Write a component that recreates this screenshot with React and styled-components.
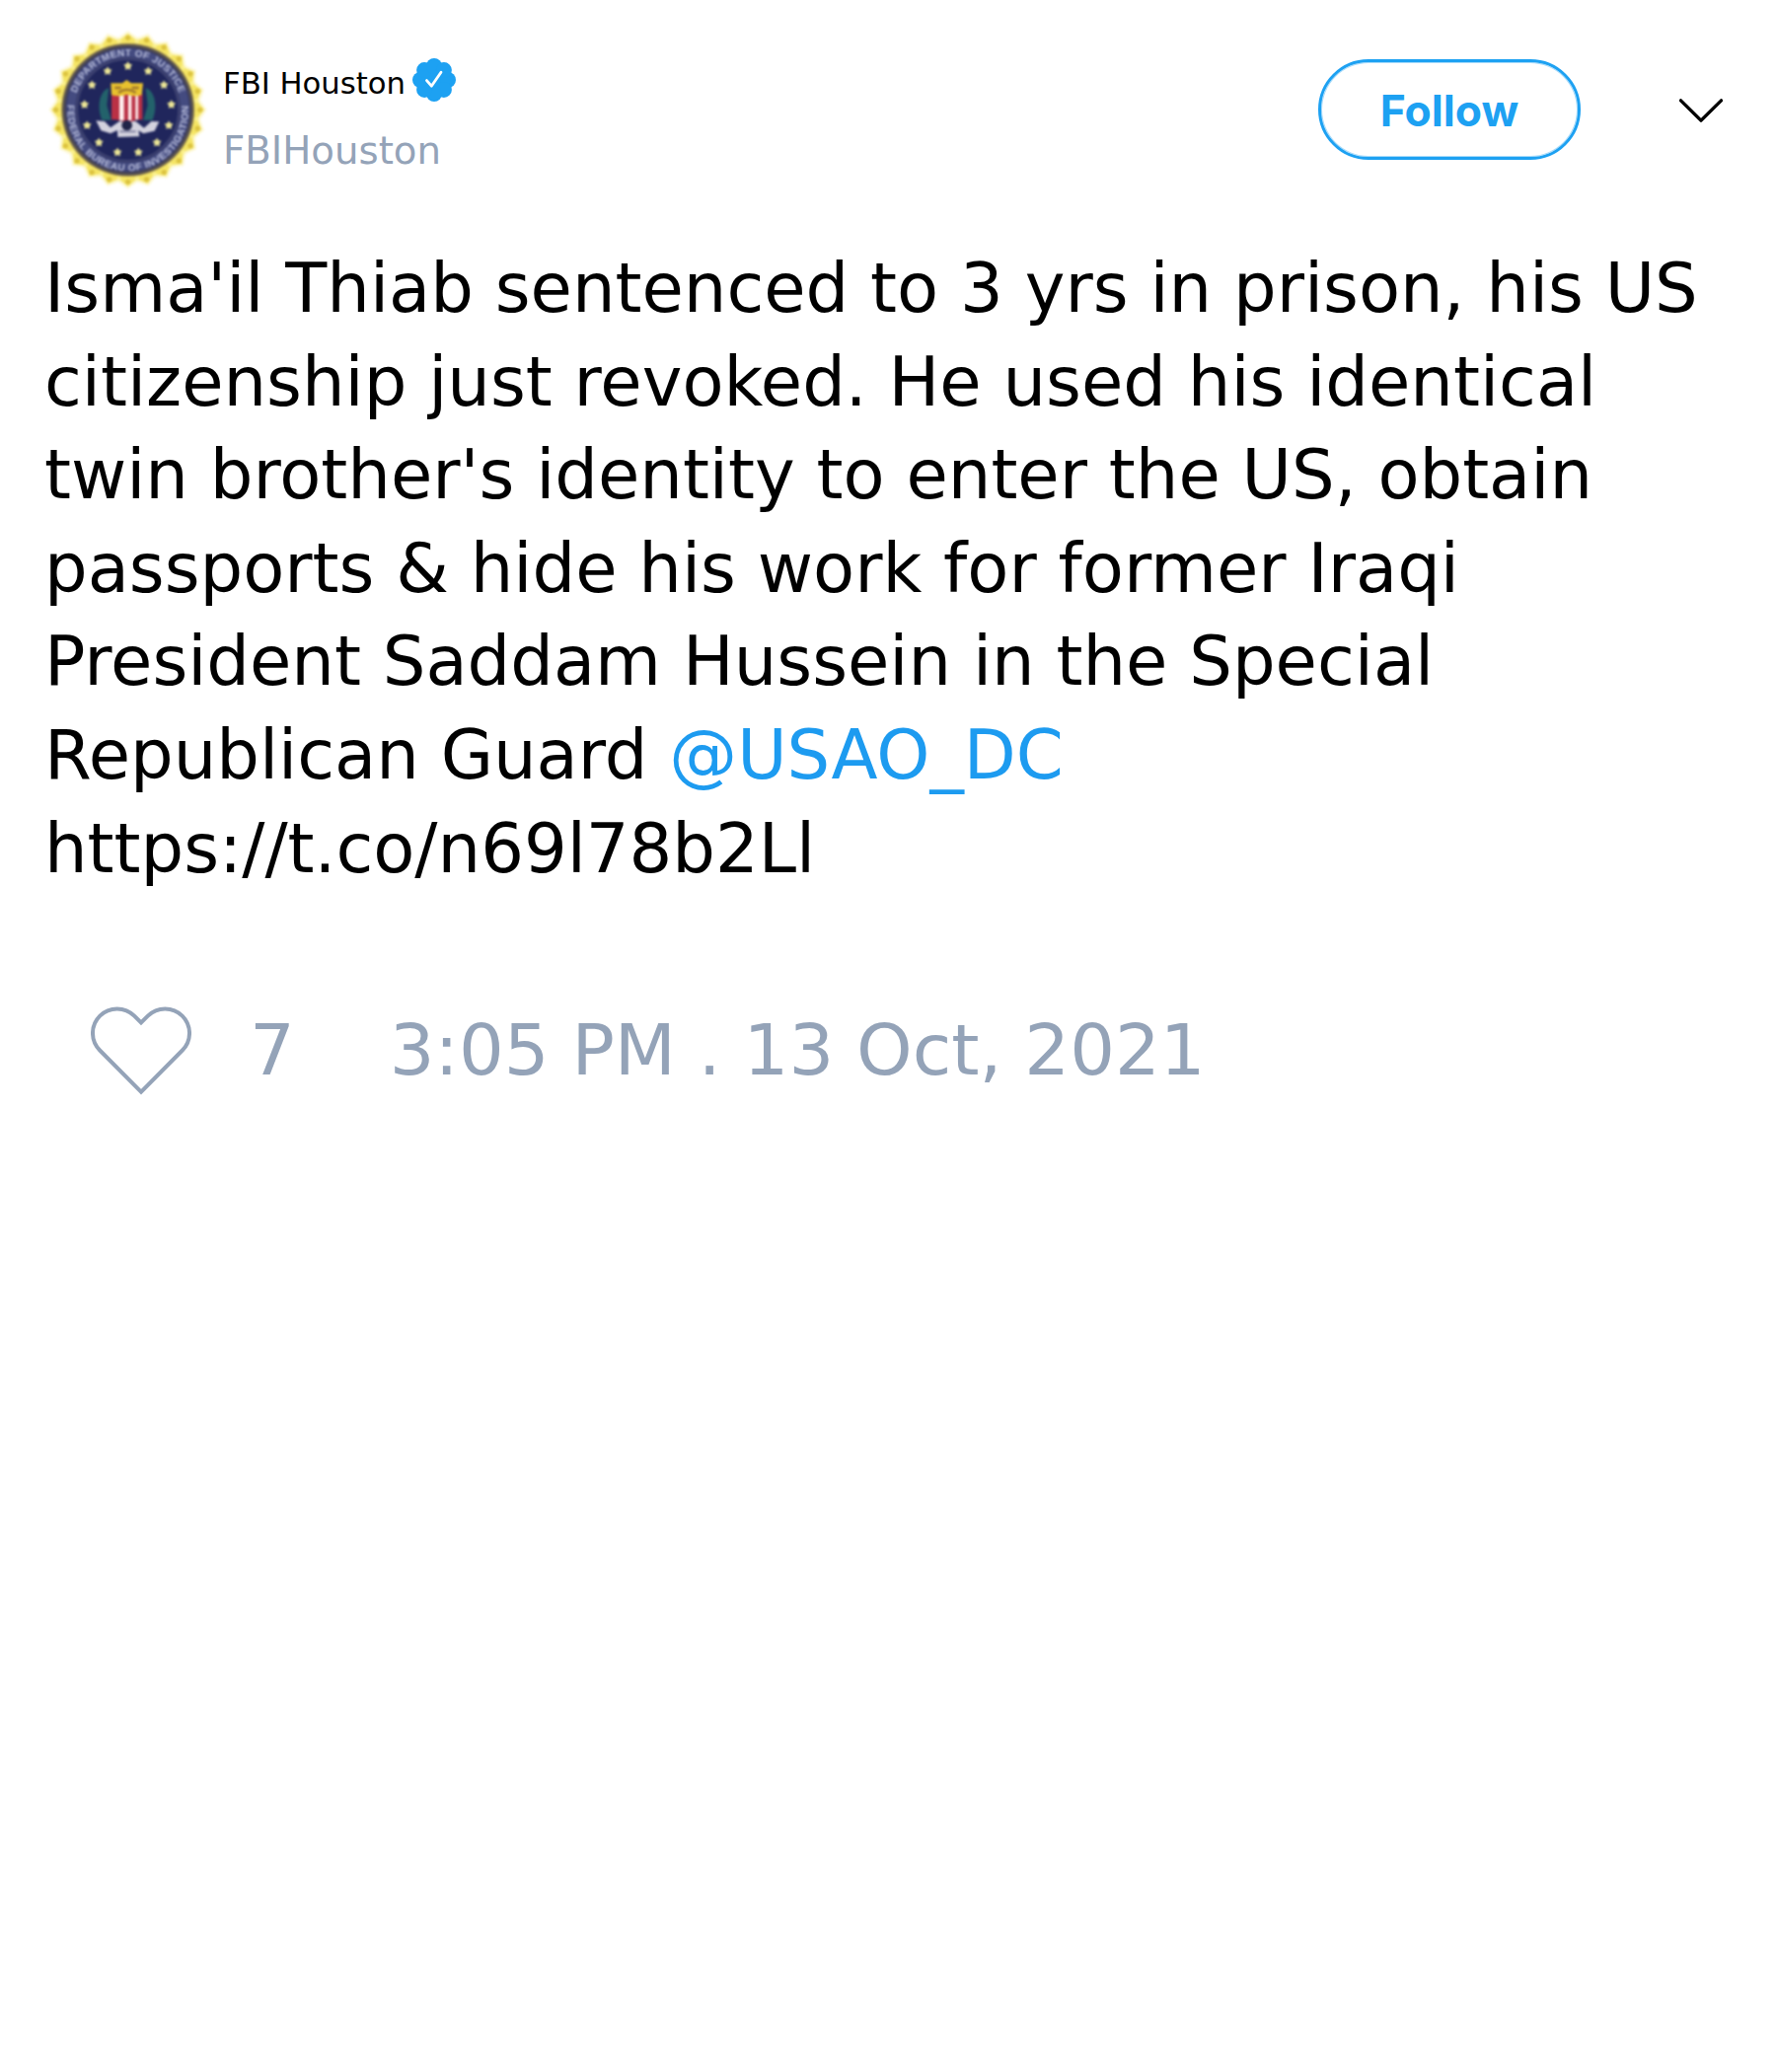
import React from "react";
import styled, { createGlobalStyle } from "styled-components";

const GlobalStyle = createGlobalStyle`
  body {
    margin: 0;
    background: #fff;
  }
`;

const Card = styled.article`
  box-sizing: border-box;
  width: 1800px;
  min-height: 2100px;
  padding: 30px 45px 0;
  background: #fff;
  color: #000;
  font-family: "DejaVu Sans", sans-serif;
`;

const Header = styled.header`
  display: flex;
  align-items: flex-start;
  height: 215px;
`;

const SealImage = styled.svg`
  flex: none;
  width: 160px;
  height: 164px;
  margin-left: 4px;
  overflow: visible;
  filter: blur(1.2px);
`;

const Identity = styled.div`
  display: flex;
  flex-direction: column;
  margin: 29px 0 0 17px;
`;

const NameRow = styled.div`
  display: flex;
  align-items: center;
  gap: 6.8px;
  height: 44px;
`;

const Name = styled.span`
  font-size: 30.7px;
  line-height: 44px;
  padding-top: 7px;
  white-space: nowrap;
`;

const BadgeIcon = styled.svg`
  width: 44px;
  height: 44px;
`;

const Handle = styled.span`
  margin-top: 26px;
  font-size: 38.7px;
  line-height: 48px;
  color: #94a3b8;
`;

const Actions = styled.div`
  display: flex;
  align-items: center;
  gap: 99px;
  margin: 30px 8px 0 auto;
`;

const FollowButton = styled.button`
  box-sizing: border-box;
  width: 266px;
  height: 102px;
  padding: 2px 0 0;
  border: 3px solid #1da1f2;
  border-radius: 51px;
  box-shadow: inset 0 0 0 1px rgba(29, 161, 242, 0.4);
  background: transparent;
  color: #1da1f2;
  font: 700 44.4px/1 Inter, sans-serif;
`;

const ChevronIcon = styled.svg`
  width: 46px;
  height: 26px;
  margin-top: 1px;
`;

const TweetText = styled.p`
  margin: 0;
  font-size: 68.8px;
  line-height: 94.6px;
  white-space: pre-line;
`;

const Mention = styled.span`
  color: #1d9bf0;
`;

const Footer = styled.footer`
  display: flex;
  align-items: flex-start;
  height: 90px;
  margin: 112.8px 0 0 47px;
  color: #94a3b8;
  font-size: 72px;
  line-height: 88px;
`;

const HeartIcon = styled.svg`
  width: 102px;
  height: 90px;
`;

const Likes = styled.span`
  margin-left: 59px;
`;

const Timestamp = styled.time`
  margin-left: 96px;
  white-space: nowrap;
`;

const CX = 269;
const CY = 274;
const polar = (radius, degrees) => {
  const a = (degrees * Math.PI) / 180;
  return [CX + radius * Math.sin(a), CY - radius * Math.cos(a)];
};
const steps = (count) => Array.from({ length: count }, (_, i) => (i * 360) / count);
const burst = (count, outer, inner) =>
  Array.from({ length: count * 2 }, (_, i) =>
    polar(i % 2 ? inner : outer, (i * 180) / count).join(","),
  ).join(" ");

function Star({ angle }) {
  const [x, y] = polar(133, angle);
  const points = Array.from({ length: 10 }, (_, i) => {
    const a = (i * Math.PI) / 5;
    const r = i % 2 ? 8 : 14;
    return `${x + r * Math.sin(a)},${y - r * Math.cos(a)}`;
  }).join(" ");
  return <polygon points={points} fill="#ebe596" />;
}

function Seal() {
  return (
    <SealImage viewBox="27 30 480 492" role="img" aria-label="FBI seal">
      <polygon points={burst(24, 240, 222)} fill="#fdf8d2" />
      <polygon points={burst(24, 232, 212)} fill="#f5e565" />
      {steps(24).map((angle) => {
        const [x, y] = polar(219, angle);
        return <circle key={angle} cx={x} cy={y} r="8" fill="#dcc340" />;
      })}
      {steps(24).map((angle) => {
        const [x, y] = polar(210, angle + 7.5);
        return <circle key={angle} cx={x} cy={y} r="7" fill="#fbf08b" />;
      })}
      <circle cx={CX} cy={CY} r="203" fill="#a8964c" />
      <circle cx={CX} cy={CY} r="199" fill="#504c52" />
      <circle cx={CX} cy={CY} r="190" fill="#343867" />
      <circle cx={CX} cy={CY} r="173" fill="none" stroke="#444b80" strokeWidth="26" />
      <circle cx={CX} cy={CY} r="154" fill="#20265c" stroke="#454a78" strokeWidth="4" />
      <defs>
        <path id="ring-top" d={`M${CX - 164} ${CY} A164 164 0 0 1 ${CX + 164} ${CY}`} />
        <path id="ring-bottom" d={`M${CX - 182} ${CY - 25} A184 184 0 1 0 ${CX + 182} ${CY - 25}`} />
      </defs>
      <g fill="#b9bedb" fontFamily="Liberation Sans, sans-serif" fontWeight="700">
        <text fontSize="30">
          <textPath href="#ring-top" startOffset="10%" textLength="412">DEPARTMENT OF JUSTICE</textPath>
        </text>
        <text fontSize="30">
          <textPath href="#ring-bottom" startOffset="1.5%" textLength="610">FEDERAL BUREAU OF INVESTIGATION</textPath>
        </text>
      </g>
      {steps(13).map((angle) => (
        <Star key={angle} angle={angle} />
      ))}
      <path d="M211 208 C180 217 175 269 190 305 L218 305 L205 260Z" fill="#23626b" />
      <path d="M323 208 C354 217 359 269 344 305 L316 305 L329 260Z" fill="#23626b" />
      <path d="M172 307 L198 309 L216 328 L244 308 L292 308 L318 329 L340 309 L364 310 L350 338 L316 346 L301 337 L304 355 L238 357 L237 336 L216 346 L187 337Z" fill="#d3d2de" />
      <path d="M219 225 H313 V304 Q290 302 267 316 Q243 302 219 304Z" fill="#ba3145" />
      <path d="M243 226h14v80h-14z M270 226h10v80h-10z M292 226h8v78h-8z" fill="#fff0ef" />
      <path d="M217 193 L252 193 L265 183 L279 193 L315 193 L311 229 Q289 236 266 227 Q242 236 219 229Z" fill="#e8c12e" />
      <path d="M229 207 H248 M281 207 H302 M240 222 Q266 203 293 222" fill="none" stroke="#9d762d" strokeWidth="7" />
      <circle cx="266" cy="321" r="16" fill="#202448" />
      <path d="M244 340 H293" stroke="#75779a" strokeWidth="5" />
    </SealImage>
  );
}

function Badge() {
  return (
    <BadgeIcon viewBox="-22 -22 44 44" role="img" aria-label="Verified">
      <g fill="#1da1f2">
        <circle r="16" />
        {steps(8).map((angle) => (
          <circle key={angle} cx="14" r="8" transform={`rotate(${angle})`} />
        ))}
      </g>
      <path d="M-7.5 0.6 L-2.7 6.2 L7 -7.8" fill="none" stroke="#fff" strokeWidth="2.8" strokeLinecap="round" strokeLinejoin="round" />
    </BadgeIcon>
  );
}

export default function App() {
  return (
    <>
      <GlobalStyle />
      <Card>
        <Header>
          <Seal />
          <Identity>
            <NameRow>
              <Name>FBI Houston</Name>
              <Badge />
            </NameRow>
            <Handle>FBIHouston</Handle>
          </Identity>
          <Actions>
            <FollowButton type="button">Follow</FollowButton>
            <ChevronIcon viewBox="0 0 46 26" aria-hidden="true">
              <path d="M2.5 2.9 L23 23.1 L43.5 2.9" fill="none" stroke="#000" strokeWidth="3.4" strokeLinecap="round" strokeLinejoin="round" />
            </ChevronIcon>
          </Actions>
        </Header>
        <TweetText>
          {"Isma'il Thiab sentenced to 3 yrs in prison, his US\ncitizenship just revoked. He used his identical\ntwin brother's identity to enter the US, obtain\npassports & hide his work for former Iraqi\nPresident Saddam Hussein in the Special\nRepublican Guard "}
          <Mention>@USAO_DC</Mention>
          {"\nhttps://t.co/n69l78b2Ll"}
        </TweetText>
        <Footer>
          <HeartIcon viewBox="96 90 306 270" aria-hidden="true">
            <path d="M249 350 L123.5 223.5 A74 74 0 0 1 228.5 119 L249 139.5 L269.5 119 A74 74 0 0 1 374.5 223.5Z" fill="none" stroke="#94a3b8" strokeWidth="12" />
          </HeartIcon>
          <Likes>7</Likes>
          <Timestamp>3:05 PM . 13 Oct, 2021</Timestamp>
        </Footer>
      </Card>
    </>
  );
}
